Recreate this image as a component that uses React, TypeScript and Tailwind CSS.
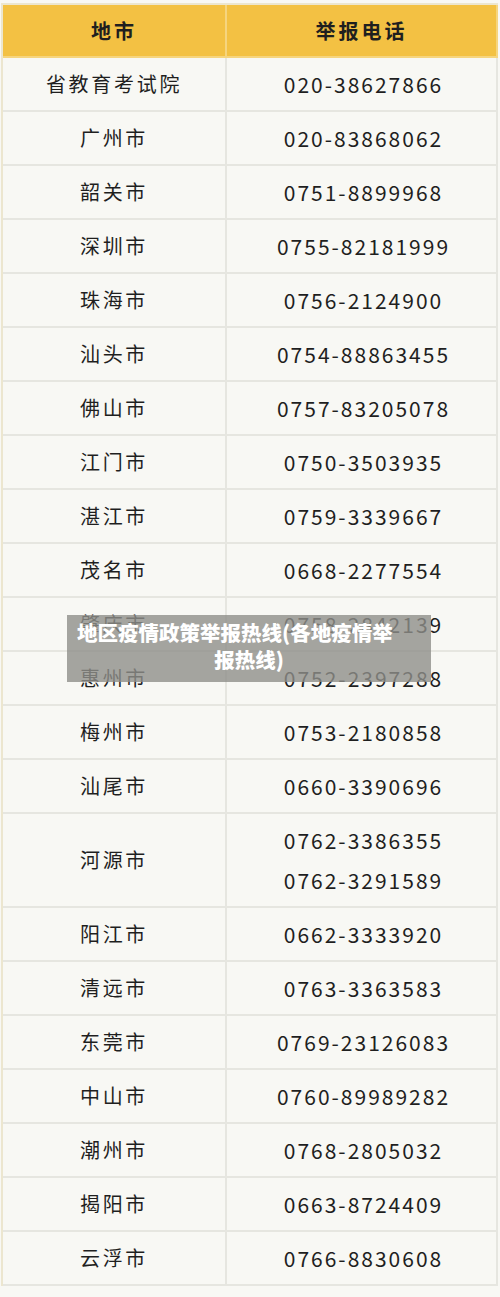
import React from "react";

const rows: { city: string; phones: string[] }[] = [
  { city: "省教育考试院", phones: ["020-38627866"] },
  { city: "广州市", phones: ["020-83868062"] },
  { city: "韶关市", phones: ["0751-8899968"] },
  { city: "深圳市", phones: ["0755-82181999"] },
  { city: "珠海市", phones: ["0756-2124900"] },
  { city: "汕头市", phones: ["0754-88863455"] },
  { city: "佛山市", phones: ["0757-83205078"] },
  { city: "江门市", phones: ["0750-3503935"] },
  { city: "湛江市", phones: ["0759-3339667"] },
  { city: "茂名市", phones: ["0668-2277554"] },
  { city: "肇庆市", phones: ["0758-2842139"] },
  { city: "惠州市", phones: ["0752-2397288"] },
  { city: "梅州市", phones: ["0753-2180858"] },
  { city: "汕尾市", phones: ["0660-3390696"] },
  { city: "河源市", phones: ["0762-3386355", "0762-3291589"] },
  { city: "阳江市", phones: ["0662-3333920"] },
  { city: "清远市", phones: ["0763-3363583"] },
  { city: "东莞市", phones: ["0769-23126083"] },
  { city: "中山市", phones: ["0760-89989282"] },
  { city: "潮州市", phones: ["0768-2805032"] },
  { city: "揭阳市", phones: ["0663-8724409"] },
  { city: "云浮市", phones: ["0766-8830608"] },
];

export default function App() {
  return (
    <div
      className="relative h-[1297px] w-[500px] overflow-hidden bg-[#f8f8f4] pl-[1px] pr-[2px] pt-[3px] text-[#1f1f1f]"
      style={{ fontFamily: '"Noto Sans CJK SC", "Noto Sans", sans-serif' }}
    >
      <div className="grid grid-cols-[224px_1fr] border-l-2 border-t-2 border-[#ece6cf]">
        <div className="flex h-[53px] items-center justify-center border-b-2 border-r-2 border-[#f6d57e] bg-[#f3c143] text-[20px] font-bold tracking-[3px]">
          地市
        </div>
        <div className="flex h-[53px] items-center justify-center border-b-2 border-r-2 border-[#f6d57e] bg-[#f3c143] text-[20px] font-bold tracking-[3px]">
          举报电话
        </div>

        {rows.map((row) => (
          <React.Fragment key={row.city}>
            <div
              className={`flex items-center justify-center border-b-2 border-r-2 border-[#e6e6e0] text-[20px] tracking-[2.7px] ${
                row.phones.length > 1 ? "h-[94px]" : "h-[54px]"
              }`}
            >
              {row.city}
            </div>
            <div
              className={`flex flex-col items-center justify-center gap-[14px] border-b-2 border-r-2 border-[#e6e6e0] text-[21px] leading-[26px] tracking-[2px] ${
                row.phones.length > 1 ? "h-[94px]" : "h-[54px]"
              }`}
            >
              {row.phones.map((p) => (
                <span key={p} className="pl-[4px]">
                  {p}
                </span>
              ))}
            </div>
          </React.Fragment>
        ))}
      </div>

      <div className="absolute left-[67px] top-[615px] h-[67px] w-[364px] bg-[#8e8e8a]/80 px-[10px] pt-[4px] text-[20.5px] font-black leading-[27px] text-white">
        <div className="whitespace-nowrap">地区疫情政策举报热线(各地疫情举</div>
        <div className="text-center">报热线)</div>
      </div>
    </div>
  );
}
